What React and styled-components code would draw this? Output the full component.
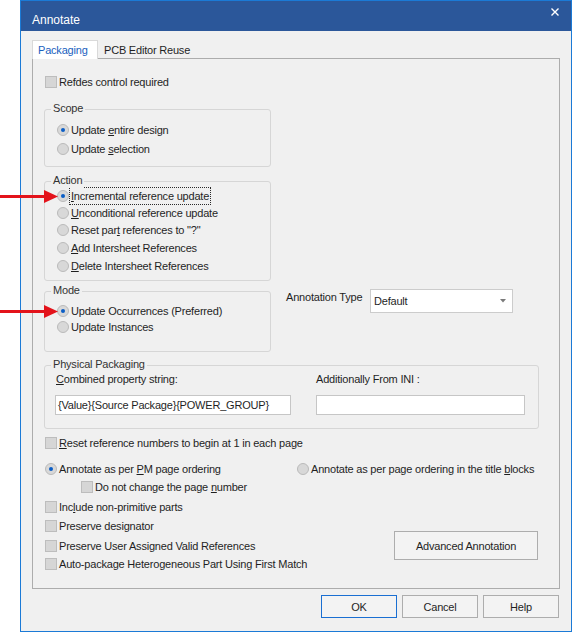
import React from 'react';
import styled, { createGlobalStyle } from 'styled-components';

const GlobalStyle = createGlobalStyle`
  html, body {
    margin: 0;
    padding: 0;
    background: #ffffff;
  }
  body {
    font-family: "Liberation Sans", Arial, sans-serif;
    font-size: 11px;
    letter-spacing: -0.2px;
    color: #1f1f1f;
  }
  u {
    text-decoration-thickness: 1px;
    text-underline-offset: 1px;
  }
`;

const Page = styled.div`
  position: relative;
  width: 572px;
  height: 633px;
  box-sizing: border-box;
  padding-left: 20px;
`;

const Window = styled.div`
  width: 552px;
  height: 632px;
  box-sizing: border-box;
  border: 1px solid #1b7ad6;
  background: #f0f0f0;
  display: flex;
  flex-direction: column;
`;

const TitleBar = styled.div`
  flex: none;
  height: 30px;
  background: #2b579a;
  display: flex;
  align-items: flex-start;
  justify-content: space-between;
  padding: 0 11px 0 11px;
`;

const Title = styled.span`
  margin-top: 12px;
  color: #ffffff;
  font-size: 12px;
  line-height: 14px;
  letter-spacing: 0;
`;

const CloseGlyph = styled.svg`
  margin-top: 6px;
  width: 10px;
  height: 10px;
`;

const Body = styled.div`
  flex: 1;
  display: flex;
  flex-direction: column;
  padding: 9px 11px 0 11px;
`;

const TabStrip = styled.div`
  display: flex;
  align-items: flex-end;
`;

const Tab = styled.div`
  position: relative;
  box-sizing: border-box;
  white-space: nowrap;
  ${(p) =>
    p.$active
      ? `
    z-index: 1;
    width: 66px;
    height: 19px;
    margin-bottom: -1px;
    padding: 0 0 0 5px;
    border: 1px solid #d9d9d9;
    border-bottom: none;
    background: #ffffff;
    color: #1a5fbe;
    line-height: 18px;
  `
      : `
    height: 16px;
    padding: 0 6px;
    color: #1f1f1f;
    line-height: 16px;
  `}
`;

const Pane = styled.div`
  width: 528px;
  height: 531px;
  box-sizing: border-box;
  border: 1px solid #acacac;
  background: #f0f0f0;
  padding: 15px 0 0 11px;
  display: flex;
  flex-direction: column;
`;

const Row = styled.div`
  display: flex;
  align-items: center;
  flex: none;
  height: 16px;
  margin-top: ${(p) => p.$mt || 0}px;
  margin-left: ${(p) => p.$ml || 0}px;
  white-space: nowrap;
`;

const RadioMark = styled.span`
  flex: none;
  width: 12px;
  height: 12px;
  box-sizing: border-box;
  border-radius: 50%;
  border: 1px solid #bababa;
  background: #d8d8d8;
  display: flex;
  align-items: center;
  justify-content: center;
  &::after {
    content: '';
    width: 4px;
    height: 4px;
    border-radius: 50%;
    background: ${(p) => (p.$on ? '#0b5ec6' : 'transparent')};
  }
`;

const CheckMark = styled.span`
  flex: none;
  width: 12px;
  height: 12px;
  box-sizing: border-box;
  border: 1px solid #bdbdbd;
  background: #d6d6d6;
`;

const Caption = styled.span`
  padding: 0 1px;
  border: 1px dotted ${(p) => (p.$focus ? '#2a2a2a' : 'transparent')};
  line-height: 16px;
`;

const Group = styled.div`
  position: relative;
  flex: none;
  box-sizing: border-box;
  width: ${(p) => p.$w || 227}px;
  height: ${(p) => p.$h}px;
  margin-top: ${(p) => p.$mt || 0}px;
  padding: ${(p) => p.$pt || 0}px 0 0 ${(p) => (p.$pl == null ? 12 : p.$pl)}px;
  border: 1px solid #d6d6d6;
  border-radius: 3px;
`;

const Legend = styled.span`
  position: absolute;
  top: -9px;
  left: 6px;
  padding: 0 2px;
  background: #f0f0f0;
  line-height: 15px;
  color: #333333;
`;

const ModeRow = styled.div`
  display: flex;
  align-items: flex-start;
  margin-top: 10px;
`;

const TypeCluster = styled.div`
  display: flex;
  align-items: flex-start;
  margin: -2px 0 0 15px;
`;

const FieldLabel = styled.span`
  display: block;
  width: ${(p) => (p.$w ? `${p.$w}px` : 'auto')};
  margin-top: ${(p) => p.$mt || 0}px;
  margin-left: ${(p) => p.$ml || 0}px;
  line-height: 15px;
  white-space: nowrap;
`;

const Combo = styled.div`
  box-sizing: border-box;
  width: 143px;
  height: 24px;
  border: 1px solid #cccccc;
  background: #ffffff;
  display: flex;
  align-items: center;
  justify-content: space-between;
  padding: 0 6px 0 3px;
  line-height: 15px;
`;

const ComboArrow = styled.svg`
  width: 6px;
  height: 4px;
`;

const PackColumns = styled.div`
  display: grid;
  grid-template-columns: 236px 209px;
  column-gap: 25px;
`;

const PackColumn = styled.div`
  display: flex;
  flex-direction: column;
  gap: 8px;
`;

const TextBox = styled.div`
  box-sizing: border-box;
  height: 20px;
  border: 1px solid #c6c6c6;
  background: #ffffff;
  padding: 0 2px;
  line-height: 18px;
  white-space: nowrap;
  overflow: hidden;
`;

const SplitRow = styled.div`
  display: grid;
  grid-template-columns: 252px auto;
  margin-top: 10px;
  margin-left: 1px;
`;

const BottomSection = styled.div`
  display: flex;
  justify-content: space-between;
  align-items: flex-start;
  margin-top: 4px;
  padding-right: 21px;
`;

const OptionColumn = styled.div`
  display: flex;
  flex-direction: column;
`;

const PushButton = styled.button`
  box-sizing: border-box;
  width: ${(p) => p.$w || 76}px;
  height: ${(p) => p.$h || 23}px;
  margin-top: ${(p) => p.$mt || 0}px;
  padding: 0;
  border: 1px solid ${(p) => (p.$default ? '#1a6fd2' : '#adadad')};
  background: #f3f3f3;
  font: inherit;
  letter-spacing: inherit;
  color: #1f1f1f;
  cursor: default;
`;

const ButtonRow = styled.div`
  display: flex;
  justify-content: flex-end;
  gap: 5px;
  margin-top: 6px;
  padding-right: 1px;
`;

const Pointer = styled.svg`
  position: absolute;
  left: 0;
  top: ${(p) => p.$top}px;
  width: 60px;
  height: 15px;
  z-index: 2;
`;

function Radio({ on, focus, children, ...rest }) {
  return (
    <Row {...rest}>
      <RadioMark $on={on} />
      <Caption $focus={focus}>{children}</Caption>
    </Row>
  );
}

function Check({ children, ...rest }) {
  return (
    <Row {...rest}>
      <CheckMark />
      <Caption>{children}</Caption>
    </Row>
  );
}

function RedPointer({ top }) {
  return (
    <Pointer $top={top} viewBox="0 0 60 15">
      <rect x="0" y="6" width="46" height="3" fill="#e3131b" />
      <polygon points="44,1 58,7.5 44,14" fill="#e3131b" />
    </Pointer>
  );
}

export default function App() {
  return (
    <>
      <GlobalStyle />
      <Page>
        <Window>
          <TitleBar>
            <Title>Annotate</Title>
            <CloseGlyph viewBox="0 0 10 10">
              <path d="M1.5 1.5 L8.5 8.5 M8.5 1.5 L1.5 8.5" stroke="#ffffff" strokeWidth="1.4" />
            </CloseGlyph>
          </TitleBar>
          <Body>
            <TabStrip>
              <Tab $active>Packaging</Tab>
              <Tab>PCB Editor Reuse</Tab>
            </TabStrip>
            <Pane>
              <Check $ml={1}>Refdes control required</Check>

              <Group $mt={19} $h={58} $pt={12}>
                <Legend>Scope</Legend>
                <Radio on>
                  Update <u>e</u>ntire design
                </Radio>
                <Radio $mt={3}>
                  Update <u>s</u>election
                </Radio>
              </Group>

              <Group $mt={14} $h={100} $pt={6}>
                <Legend>Action</Legend>
                <Radio on focus>
                  <u>I</u>ncremental reference update
                </Radio>
                <Radio $mt={1}>
                  <u>U</u>nconditional reference update
                </Radio>
                <Radio $mt={1}>
                  Reset par<u>t</u> references to "?"
                </Radio>
                <Radio $mt={2}>
                  <u>A</u>dd Intersheet References
                </Radio>
                <Radio $mt={2}>
                  <u>D</u>elete Intersheet References
                </Radio>
              </Group>

              <ModeRow>
                <Group $h={61} $pt={11}>
                  <Legend>Mode</Legend>
                  <Radio on>Update Occurrences (Preferred)</Radio>
                  <Radio>Update Instances</Radio>
                </Group>
                <TypeCluster>
                  <FieldLabel $w={84} $mt={1}>
                    Annotation Type
                  </FieldLabel>
                  <Combo>
                    <span>Default</span>
                    <ComboArrow viewBox="0 0 6 4">
                      <polygon points="0,0 6,0 3,3.5" fill="#7a7a7a" />
                    </ComboArrow>
                  </Combo>
                </TypeCluster>
              </ModeRow>

              <Group $mt={13} $h={64} $w={495} $pt={6} $pl={10}>
                <Legend>Physical Packaging</Legend>
                <PackColumns>
                  <PackColumn>
                    <FieldLabel $ml={1}>
                      <u>C</u>ombined property string:
                    </FieldLabel>
                    <TextBox>{'{Value}{Source Package}{POWER_GROUP}'}</TextBox>
                  </PackColumn>
                  <PackColumn>
                    <FieldLabel>Additionally From INI :</FieldLabel>
                    <TextBox />
                  </PackColumn>
                </PackColumns>
              </Group>

              <Check $ml={1} $mt={6}>
                <u>R</u>eset reference numbers to begin at 1 in each page
              </Check>

              <SplitRow>
                <Radio on>
                  Annotate as per <u>P</u>M page ordering
                </Radio>
                <Radio>
                  Annotate as per page ordering in the title <u>b</u>locks
                </Radio>
              </SplitRow>

              <Check $ml={37} $mt={2}>
                Do not change the page <u>n</u>umber
              </Check>

              <BottomSection>
                <OptionColumn>
                  <Check $ml={1}>
                    Inc<u>l</u>ude non-primitive parts
                  </Check>
                  <Check $ml={1} $mt={3}>
                    Preserve designator
                  </Check>
                  <Check $ml={1} $mt={4}>
                    Preserve User Assigned Valid References
                  </Check>
                  <Check $ml={1} $mt={2}>
                    Auto-package Heterogeneous Part Using First Match
                  </Check>
                </OptionColumn>
                <PushButton $w={144} $h={29} $mt={32}>
                  Advanced Annotation
                </PushButton>
              </BottomSection>
            </Pane>
            <ButtonRow>
              <PushButton $default>OK</PushButton>
              <PushButton>Cancel</PushButton>
              <PushButton>Help</PushButton>
            </ButtonRow>
          </Body>
        </Window>
        <RedPointer top={189} />
        <RedPointer top={304} />
      </Page>
    </>
  );
}
